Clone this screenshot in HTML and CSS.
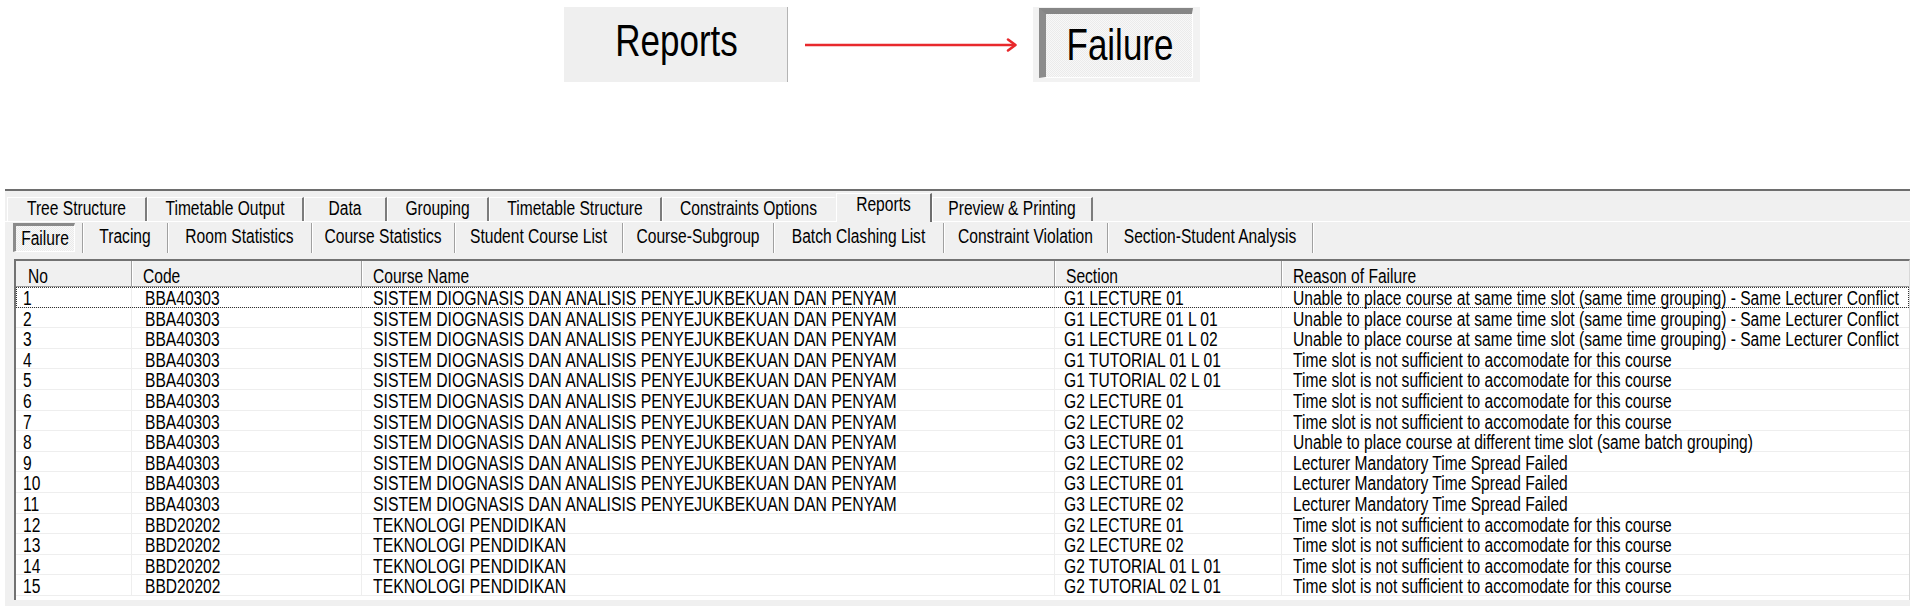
FILE: index.html
```html
<!DOCTYPE html>
<html lang="en">
<head>
<meta charset="utf-8">
<title>Reports - Failure</title>
<link rel="stylesheet" href="styles.css">
</head>
<body>
<div class="hero">
  <div class="hero-row">
    <div class="big-tab"><span class="t">Reports</span></div>
    <svg class="arrow" width="213" height="16" viewBox="0 0 213 16">
      <line x1="0" y1="8" x2="210" y2="8" stroke="#e8292c" stroke-width="2.6"/>
      <polyline points="203,2.5 210.5,8 203,13.5" fill="none" stroke="#e8292c" stroke-width="2.6" stroke-linecap="round" stroke-linejoin="round"/>
    </svg>
    <div class="big-btn"><div class="big-btn-inner"><span class="t">Failure</span></div></div>
  </div>
</div>

<div class="tabctl">
  <div class="tabs">
    <div class="tab"><span class="t">Tree Structure</span></div>
    <div class="tab"><span class="t">Timetable Output</span></div>
    <div class="tab"><span class="t">Data</span></div>
    <div class="tab"><span class="t">Grouping</span></div>
    <div class="tab"><span class="t">Timetable Structure</span></div>
    <div class="tab tab-before-sel"><span class="t">Constraints Options</span></div>
    <div class="tab tab-sel"><span class="t">Reports</span></div>
    <div class="tab"><span class="t">Preview &amp; Printing</span></div>
  </div>
  <div class="page">
    <div class="subtabs">
      <div class="subtab subtab-sel"><span class="subtab-btn"><span class="t">Failure</span></span></div>
      <div class="subtab"><span class="t">Tracing</span></div>
      <div class="subtab"><span class="t">Room Statistics</span></div>
      <div class="subtab"><span class="t">Course Statistics</span></div>
      <div class="subtab"><span class="t">Student Course List</span></div>
      <div class="subtab"><span class="t">Course-Subgroup</span></div>
      <div class="subtab"><span class="t">Batch Clashing List</span></div>
      <div class="subtab"><span class="t">Constraint Violation</span></div>
      <div class="subtab"><span class="t">Section-Student Analysis</span></div>
    </div>
    <div class="listview">
      <div class="lv-head">
        <div class="hcell"><span class="t">No</span></div>
        <div class="hcell"><span class="t">Code</span></div>
        <div class="hcell"><span class="t">Course Name</span></div>
        <div class="hcell"><span class="t">Section</span></div>
        <div class="hcell"><span class="t">Reason of Failure</span></div>
      </div>
      <div class="lv-body">
        <div class="row row-focus"><div class="cell"><span class="t">1</span></div><div class="cell"><span class="t">BBA40303</span></div><div class="cell"><span class="t">SISTEM DIOGNASIS DAN ANALISIS PENYEJUKBEKUAN DAN PENYAM</span></div><div class="cell"><span class="t">G1 LECTURE 01</span></div><div class="cell"><span class="t">Unable to place course at same time slot (same time grouping) - Same Lecturer Conflict</span></div></div>
        <div class="row"><div class="cell"><span class="t">2</span></div><div class="cell"><span class="t">BBA40303</span></div><div class="cell"><span class="t">SISTEM DIOGNASIS DAN ANALISIS PENYEJUKBEKUAN DAN PENYAM</span></div><div class="cell"><span class="t">G1 LECTURE 01 L 01</span></div><div class="cell"><span class="t">Unable to place course at same time slot (same time grouping) - Same Lecturer Conflict</span></div></div>
        <div class="row"><div class="cell"><span class="t">3</span></div><div class="cell"><span class="t">BBA40303</span></div><div class="cell"><span class="t">SISTEM DIOGNASIS DAN ANALISIS PENYEJUKBEKUAN DAN PENYAM</span></div><div class="cell"><span class="t">G1 LECTURE 01 L 02</span></div><div class="cell"><span class="t">Unable to place course at same time slot (same time grouping) - Same Lecturer Conflict</span></div></div>
        <div class="row"><div class="cell"><span class="t">4</span></div><div class="cell"><span class="t">BBA40303</span></div><div class="cell"><span class="t">SISTEM DIOGNASIS DAN ANALISIS PENYEJUKBEKUAN DAN PENYAM</span></div><div class="cell"><span class="t">G1 TUTORIAL 01 L 01</span></div><div class="cell"><span class="t">Time slot is not sufficient to accomodate for this course</span></div></div>
        <div class="row"><div class="cell"><span class="t">5</span></div><div class="cell"><span class="t">BBA40303</span></div><div class="cell"><span class="t">SISTEM DIOGNASIS DAN ANALISIS PENYEJUKBEKUAN DAN PENYAM</span></div><div class="cell"><span class="t">G1 TUTORIAL 02 L 01</span></div><div class="cell"><span class="t">Time slot is not sufficient to accomodate for this course</span></div></div>
        <div class="row"><div class="cell"><span class="t">6</span></div><div class="cell"><span class="t">BBA40303</span></div><div class="cell"><span class="t">SISTEM DIOGNASIS DAN ANALISIS PENYEJUKBEKUAN DAN PENYAM</span></div><div class="cell"><span class="t">G2 LECTURE 01</span></div><div class="cell"><span class="t">Time slot is not sufficient to accomodate for this course</span></div></div>
        <div class="row"><div class="cell"><span class="t">7</span></div><div class="cell"><span class="t">BBA40303</span></div><div class="cell"><span class="t">SISTEM DIOGNASIS DAN ANALISIS PENYEJUKBEKUAN DAN PENYAM</span></div><div class="cell"><span class="t">G2 LECTURE 02</span></div><div class="cell"><span class="t">Time slot is not sufficient to accomodate for this course</span></div></div>
        <div class="row"><div class="cell"><span class="t">8</span></div><div class="cell"><span class="t">BBA40303</span></div><div class="cell"><span class="t">SISTEM DIOGNASIS DAN ANALISIS PENYEJUKBEKUAN DAN PENYAM</span></div><div class="cell"><span class="t">G3 LECTURE 01</span></div><div class="cell"><span class="t">Unable to place course at different time slot (same batch grouping)</span></div></div>
        <div class="row"><div class="cell"><span class="t">9</span></div><div class="cell"><span class="t">BBA40303</span></div><div class="cell"><span class="t">SISTEM DIOGNASIS DAN ANALISIS PENYEJUKBEKUAN DAN PENYAM</span></div><div class="cell"><span class="t">G2 LECTURE 02</span></div><div class="cell"><span class="t">Lecturer Mandatory Time Spread Failed</span></div></div>
        <div class="row"><div class="cell"><span class="t">10</span></div><div class="cell"><span class="t">BBA40303</span></div><div class="cell"><span class="t">SISTEM DIOGNASIS DAN ANALISIS PENYEJUKBEKUAN DAN PENYAM</span></div><div class="cell"><span class="t">G3 LECTURE 01</span></div><div class="cell"><span class="t">Lecturer Mandatory Time Spread Failed</span></div></div>
        <div class="row"><div class="cell"><span class="t">11</span></div><div class="cell"><span class="t">BBA40303</span></div><div class="cell"><span class="t">SISTEM DIOGNASIS DAN ANALISIS PENYEJUKBEKUAN DAN PENYAM</span></div><div class="cell"><span class="t">G3 LECTURE 02</span></div><div class="cell"><span class="t">Lecturer Mandatory Time Spread Failed</span></div></div>
        <div class="row"><div class="cell"><span class="t">12</span></div><div class="cell"><span class="t">BBD20202</span></div><div class="cell"><span class="t">TEKNOLOGI PENDIDIKAN</span></div><div class="cell"><span class="t">G2 LECTURE 01</span></div><div class="cell"><span class="t">Time slot is not sufficient to accomodate for this course</span></div></div>
        <div class="row"><div class="cell"><span class="t">13</span></div><div class="cell"><span class="t">BBD20202</span></div><div class="cell"><span class="t">TEKNOLOGI PENDIDIKAN</span></div><div class="cell"><span class="t">G2 LECTURE 02</span></div><div class="cell"><span class="t">Time slot is not sufficient to accomodate for this course</span></div></div>
        <div class="row"><div class="cell"><span class="t">14</span></div><div class="cell"><span class="t">BBD20202</span></div><div class="cell"><span class="t">TEKNOLOGI PENDIDIKAN</span></div><div class="cell"><span class="t">G2 TUTORIAL 01 L 01</span></div><div class="cell"><span class="t">Time slot is not sufficient to accomodate for this course</span></div></div>
        <div class="row"><div class="cell"><span class="t">15</span></div><div class="cell"><span class="t">BBD20202</span></div><div class="cell"><span class="t">TEKNOLOGI PENDIDIKAN</span></div><div class="cell"><span class="t">G2 TUTORIAL 02 L 01</span></div><div class="cell"><span class="t">Time slot is not sufficient to accomodate for this course</span></div></div>
      </div>
    </div>
  </div>
</div>
</body>
</html>
```

FILE: styles.css
```css
* { box-sizing: border-box; }

html, body {
  margin: 0;
  padding: 0;
  background: #ffffff;
  overflow: hidden;
}

body {
  width: 1920px;
  height: 606px;
  font-family: "Liberation Sans", Arial, sans-serif;
  font-size: 15.6px;
  color: #000;
}

/* text in the original capture is stretched vertically */
.t {
  display: inline-block;
  transform: scaleY(1.27);
  white-space: nowrap;
}

/* ---------- top illustration ---------- */
.hero {
  height: 189px;
  padding: 7px 0 0 564px;
}

.hero-row {
  display: flex;
  align-items: center;
  height: 75px;
}

.big-tab {
  width: 224px;
  height: 75px;
  background: #efefef;
  border-right: 1px solid #b4b4b4;
  display: flex;
  align-items: center;
  justify-content: center;
  font-size: 35px;
  padding-bottom: 8px;
  padding-left: 2px;
}

.arrow {
  display: block;
  margin-left: 17px;
  margin-right: 15px;
}

.big-btn {
  width: 167px;
  height: 75px;
  background: #f2f2f2;
  padding: 1px 7px 4px 6px;
}

.big-btn-inner {
  height: 100%;
  border-top: 6px solid #868686;
  border-left: 7px solid #8c8c8c;
  border-right: 1px solid #ffffff;
  border-bottom: 1px solid #ffffff;
  background-color: #f6f6f6;
  background-image: repeating-conic-gradient(#f8f8f8 0 25%, #ebebeb 0 50%);
  background-size: 2px 2px;
  display: flex;
  align-items: center;
  justify-content: center;
  font-size: 35px;
  padding-bottom: 2px;
  padding-left: 2px;
}

/* ---------- tab control ---------- */
.tabctl {
  margin-left: 5px;
  width: 1905px;
  height: 417px;
  background: #f0f0f0;
  border-top: 2px solid #6e6e6e;
}

.tabs {
  display: grid;
  grid-template-columns: 140px 157px 83px 102px 173px 174px 96px 161px;
  height: 30px;
  padding-left: 2px;
  align-items: end;
}

.tab {
  height: 24px;
  line-height: 22px;
  text-align: center;
  border-left: 1px solid #ffffff;
  border-top: 1px solid #ffffff;
  border-right: 2px solid #7c7c7c;
  white-space: nowrap;
}

.tab-before-sel {
  border-right-color: transparent;
}

.tab-sel {
  height: 29px;
  line-height: 22px;
  margin-bottom: -1px;
  background: #f0f0f0;
  border-left: 1px solid #ffffff;
  border-top: 1px solid #ffffff;
  border-right: 2px solid #6e6e6e;
  position: relative;
  z-index: 1;
}

.page {
  border-top: 1px solid #ffffff;
}

/* sub tabs */
.subtabs {
  display: grid;
  grid-template-columns: 70px 85px 144px 143px 168px 151px 170px 164px 205px;
  height: 37px;
  margin-left: 8px;
  padding-top: 1px;
  align-items: start;
}

.subtab {
  height: 30px;
  line-height: 28px;
  text-align: center;
  white-space: nowrap;
  border-right: 1px solid #a0a0a0;
  box-shadow: 1px 0 0 #ffffff;
}

.subtab-sel {
  text-align: left;
}

.subtab-btn {
  display: block;
  width: 62px;
  height: 29px;
  line-height: 25px;
  text-align: center;
  border-top: 3px solid #8a8a8a;
  border-left: 3px solid #8a8a8a;
  border-right: 1px solid #ffffff;
  border-bottom: 1px solid #ffffff;
  background-color: #f6f6f6;
  background-image: repeating-conic-gradient(#f8f8f8 0 25%, #eaeaea 0 50%);
  background-size: 2px 2px;
}

/* list view */
.listview {
  --cols: 116px 230px 693px 227px 1fr;
  margin-left: 9px;
  background: #ffffff;
  border-top: 2px solid #727272;
  border-left: 2px solid #727272;
  border-right: 1px solid #d8d8d8;
  height: 341px;
  overflow: hidden;
}

.lv-head {
  display: grid;
  grid-template-columns: var(--cols);
  height: 26px;
  background: #f0f0f0;
  border-bottom: 1px solid #9a9a9a;
}

.hcell {
  line-height: 17px;
  padding-top: 7px;
  padding-left: 11px;
  border-right: 1px solid #a0a0a0;
  box-shadow: inset 1px 0 0 #ffffff;
  white-space: nowrap;
}

.hcell:first-child {
  padding-left: 12px;
  box-shadow: none;
}

.hcell:last-child {
  border-right: none;
}

.row {
  display: grid;
  grid-template-columns: var(--cols);
  height: 20.6px;
  border-bottom: 1px solid #eeeeee;
}

.row-focus {
  outline: 1px dotted #333333;
  outline-offset: -1px;
}

.cell {
  line-height: 14.6px;
  padding-top: 5px;
  padding-left: 11px;
  white-space: nowrap;
  border-right: 1px solid #eeeeee;
}

.cell:first-child {
  padding-left: 7px;
}

.cell:nth-child(2) {
  padding-left: 13px;
}

.cell:nth-child(3) {
  font-size: 15.8px;
}

.cell:nth-child(4) {
  padding-left: 9px;
}

.cell:nth-child(5) {
  padding-left: 11px;
  border-right: none;
}
```
